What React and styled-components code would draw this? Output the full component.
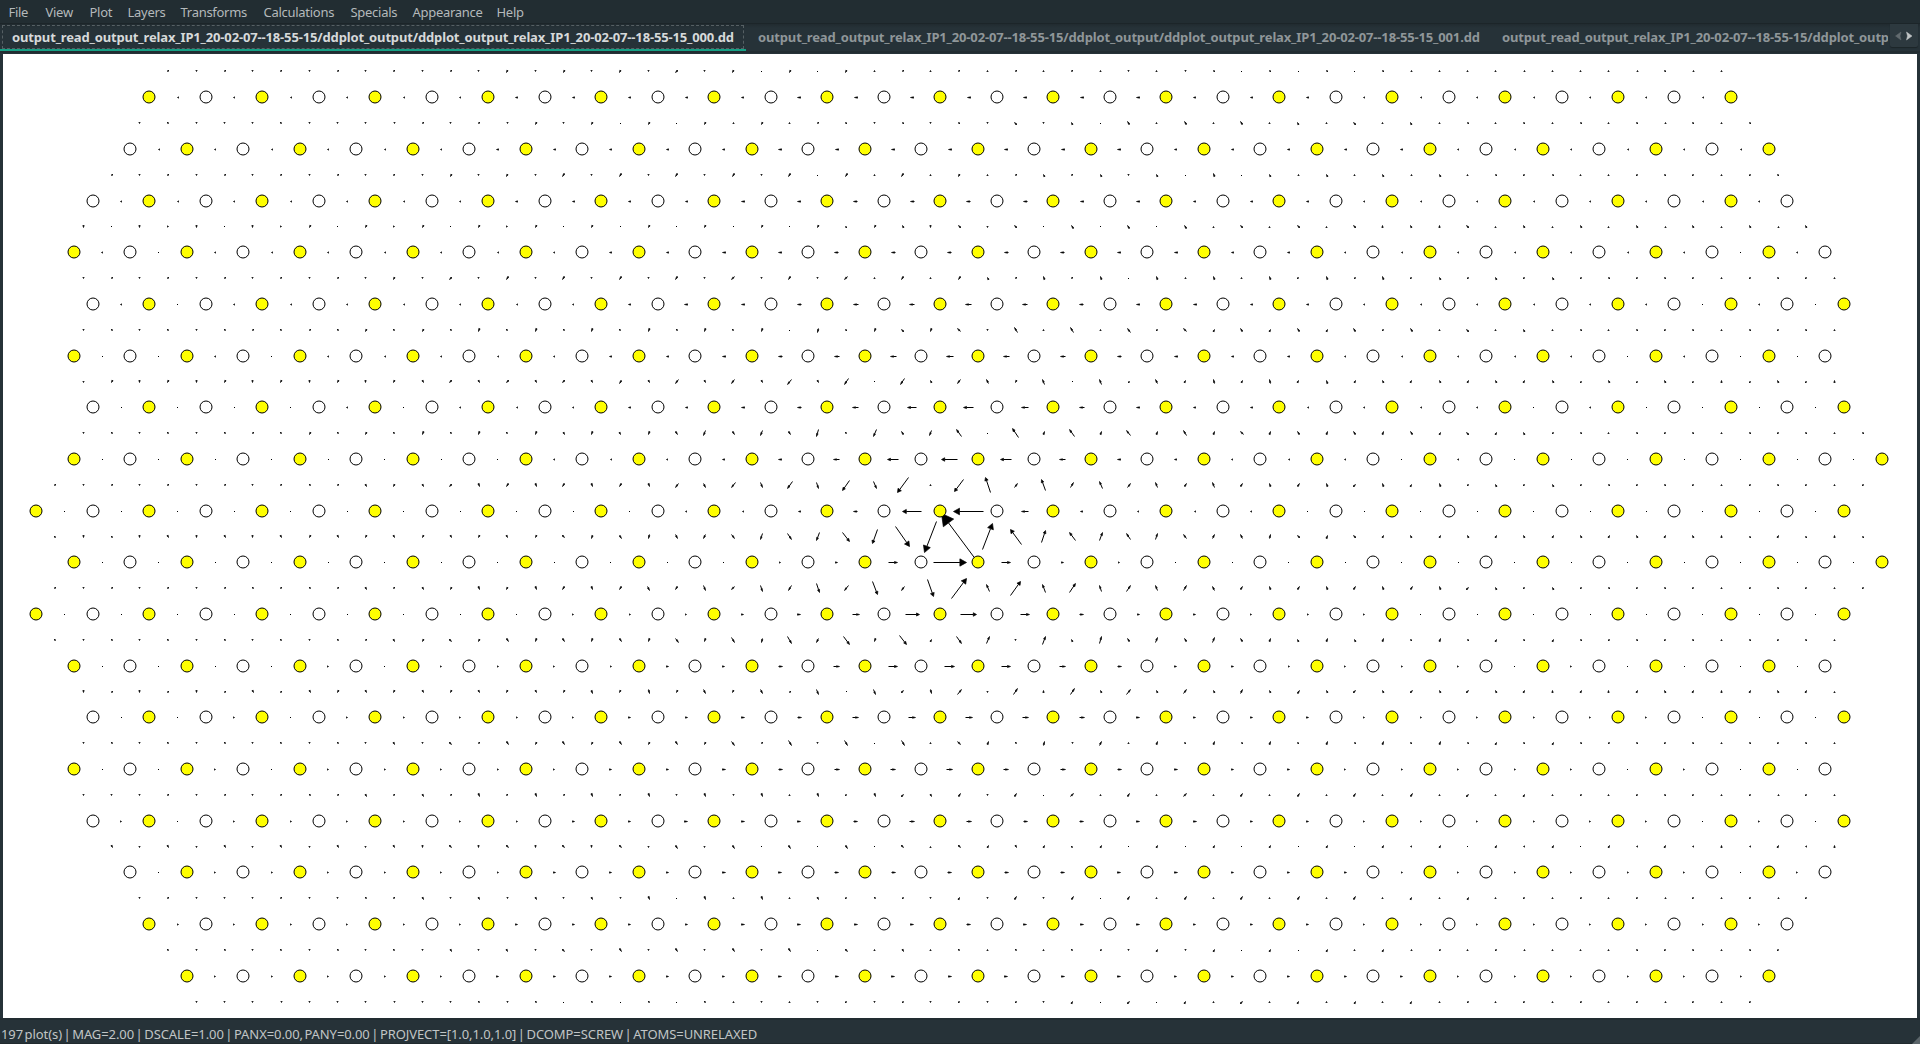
import React from 'react';
import styled, { createGlobalStyle } from 'styled-components';

const Global = createGlobalStyle`
  * { box-sizing: border-box; }
  body { margin: 0; background: #263238; overflow: hidden; }
`;

const Window = styled.div`
  display: grid;
  grid-template-rows: 24px 30px 964px 26px;
  width: 1920px;
  height: 1044px;
  background: #263238;
  font-family: "Noto Sans", "Open Sans", sans-serif;
  font-size: 13px;
  letter-spacing: -0.28px;
  color: #c1c5c6;
  white-space: nowrap;
`;

const MenuBar = styled.nav`
  display: flex;
  align-items: center;
  padding-left: 0.5px;
  background: #222d32;
  border-bottom: 1px solid #1c2529;
`;

const MenuItem = styled.span`
  width: ${(p) => p.$w}px;
  padding-left: 8px;
  line-height: 24px;
  color: #b4b9bb;
`;

const TabBar = styled.div`
  display: flex;
  border-bottom: 1px solid #263238;
  background: linear-gradient(#212b30, #263238 4px);
  box-shadow: inset 0 -2px 0 #222c31;
`;

const TabStrip = styled.div`
  display: flex;
  width: 1888px;
  height: 27px;
  overflow: hidden;
`;

const Tab = styled.div`
  flex: none;
  width: ${(p) => p.$w}px;
  height: 27px;
  padding: 1px 2px 1px 2px;
  border-bottom: 2px solid ${(p) => (p.$active ? '#16a085' : 'transparent')};
`;

const TabLabel = styled.div`
  height: 24px;
  padding-left: 9px;
  border: 1px dashed ${(p) => (p.$active ? '#566064' : 'transparent')};
  font-weight: 700;
  line-height: 23px;
  letter-spacing: -0.15px;
  color: ${(p) => (p.$active ? '#d6d9da' : '#8f9699')};
`;

const Scroller = styled.div`
  width: 28px;
  height: 23px;
  margin-left: 2px;
  display: flex;
  align-items: center;
  justify-content: center;
  background: #2d393f;
  border-radius: 0 0 2px 2px;
  box-shadow: 0 1px 1px #1c2529;
`;

const Canvas = styled.main`
  margin: 0 3px;
  background: #fff;
`;

const StatusBar = styled.footer`
  display: flex;
  align-items: flex-end;
  justify-content: space-between;
  padding-left: 1px;
  box-shadow: inset 0 3px 0 -1px #222c31, inset 0 -1px 0 #202a2e;
`;

const StatusText = styled.span`
  line-height: 19px;
  letter-spacing: -0.08px;
  word-spacing: -1.75px;
`;

const PERIOD = 113;
/* First and last atom position of every lattice row, including the hidden rows above and below. */
const ROWS = [
  [187, 1712], [149, 1731], [130, 1769], [93, 1787], [74, 1825], [93, 1844], [74, 1825], [93, 1844], [74, 1882],
  [36, 1844], [74, 1882], [36, 1844], [74, 1825], [93, 1844], [74, 1825], [93, 1844], [130, 1825], [149, 1787],
  [187, 1769], [206, 1731],
];
const CORE = { x: 950, y: 541 };
const BURGERS = 145;
const CORE_BOND = 33;

const rows = ROWS.map(([from, to], i) => {
  const y = Math.round(97.15 + (i - 1) * 51.69);
  const [yellow, white] = i % 2 ? [36, 93] : [74, 130];
  const atoms = [];
  for (let k = 0; k < 18; k += 1) {
    const shift = i % 2 && k >= 14 ? 1 : 0;
    atoms.push({ x: yellow + k * PERIOD, y, yellow: true });
    atoms.push({ x: white + k * PERIOD - shift, y, yellow: false });
  }
  return atoms.filter((a) => a.x >= from - 2 && a.x <= to + 2).sort((a, b) => a.x - b.x);
});

const theta = (a) => Math.atan2(CORE.y - a.y, a.x - CORE.x);

function bond(a, b) {
  let d = (theta(b) - theta(a)) / (2 * Math.PI);
  d -= Math.round(d);
  const dist = Math.hypot(b.x - a.x, b.y - a.y);
  let len = d * BURGERS;
  if (Math.abs(len) > CORE_BOND && dist < 60) len = Math.sign(len) * CORE_BOND;
  const ux = (b.x - a.x) / dist;
  const uy = (b.y - a.y) / dist;
  const mx = (a.x + b.x) / 2 - 0.3;
  const my = (a.y + b.y) / 2 - (a.y === b.y ? 0 : 0.4);
  return [
    mx - (ux * len) / 2,
    my - (uy * len) / 2,
    mx + (ux * len) / 2,
    my + (uy * len) / 2,
  ].map((v) => Math.round(v) + 0.5);
}

const arrows = [];
rows.forEach((row, i) => {
  if (i > 0 && i < rows.length - 1) {
    for (let k = 1; k < row.length; k += 1) arrows.push(bond(row[k - 1], row[k]));
  }
  const next = rows[i + 1];
  if (next) {
    row.forEach((a) => next.forEach((b) => {
      if (Math.abs(a.x - b.x) < 45) arrows.push(bond(a, b));
    }));
  }
});

function Arrow({ p }) {
  const [x1, y1, x2, y2] = p;
  const len = Math.hypot(x2 - x1, y2 - y1);
  if (len < 0.5) return <rect x={x1 - 0.5} y={y1 - 0.5} width="1" height="1" />;
  const ux = (x2 - x1) / len;
  const uy = (y2 - y1) / len;
  const h = Math.min(len, Math.max(len * 0.2, 3));
  const w = Math.max(len * 0.11, 0.7);
  const bx = x2 - ux * h;
  const by = y2 - uy * h;
  return (
    <g>
      <line x1={x1} y1={y1} x2={bx} y2={by} stroke="#000" />
      <polygon
        points={`${x2},${y2} ${bx - uy * w},${by + ux * w} ${bx + uy * w},${by - ux * w}`}
        stroke="#000"
        strokeWidth="0.7"
        strokeLinejoin="round"
      />
    </g>
  );
}

const MENU = [['File', 37], ['View', 44], ['Plot', 38], ['Layers', 53], ['Transforms', 83], ['Calculations', 87], ['Specials', 62], ['Appearance', 84], ['Help', 50]];
const BASE = 'output_read_output_relax_IP1_20-02-07--18-55-15/ddplot_output/ddplot_output_relax_IP1_20-02-07--18-55-15_';

export default function App() {
  return (
    <Window>
      <Global />
      <MenuBar>{MENU.map(([t, w]) => <MenuItem key={t} $w={w}>{t}</MenuItem>)}</MenuBar>
      <TabBar>
        <TabStrip>
          {['000', '001', '002'].map((n, i) => (
            <Tab key={n} $w={i ? 744 : 746} $active={i === 0}>
              <TabLabel $active={i === 0}>{`${BASE}${n}.dd`}</TabLabel>
            </Tab>
          ))}
        </TabStrip>
        <Scroller>
          <svg width="20" height="10" viewBox="0 0 20 10">
            <path d="M7 1 L1.5 5 L7 9 L6 5Z" fill="#626b6f" stroke="#626b6f" strokeWidth="0.5" />
            <path d="M12.5 1 L18 5 L12.5 9 L13.5 5Z" fill="#c1c5c6" stroke="#c1c5c6" strokeWidth="0.5" />
          </svg>
        </Scroller>
      </TabBar>
      <Canvas>
        <svg width="1914" height="964" viewBox="3 54 1914 964" display="block">
          {arrows.map((p, i) => <Arrow key={i} p={p} />)}
          {rows.slice(1, -1).flat().map((a, i) => (
            <circle key={i} cx={a.x} cy={a.y} r="6" fill={a.yellow ? '#ff0' : 'none'} stroke="#000" />
          ))}
        </svg>
      </Canvas>
      <StatusBar>
        <StatusText>197 plot(s) | MAG=2.00 | DSCALE=1.00 | PANX=0.00, PANY=0.00 | PROJVECT=[1.0,1.0,1.0] | DCOMP=SCREW | ATOMS=UNRELAXED</StatusText>
        <svg width="8" height="8" viewBox="0 0 8 8" display="block">
          <path d="M8 0 V8 H0Z" fill="#5c666b" />
        </svg>
      </StatusBar>
    </Window>
  );
}
